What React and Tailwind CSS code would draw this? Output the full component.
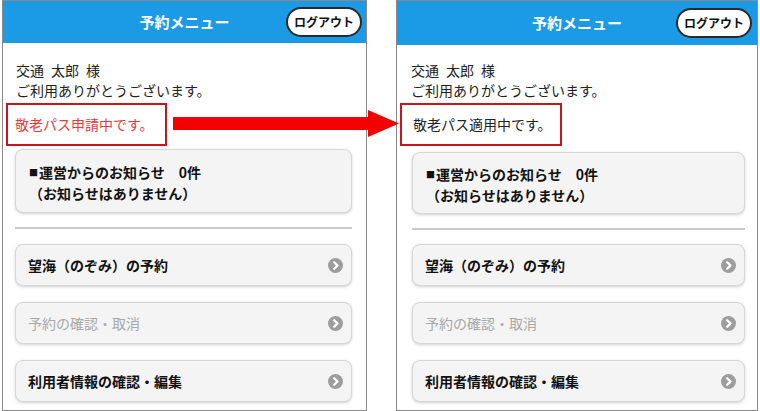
const panels = [
  {
    key: 'before',
    wrap: 'ml-[2px] w-[365px]',
    header: 'h-[42px]',
    logout: 'mr-[4px]',
    body: 'pt-[17px] pl-[3px] pr-[14px]',
    indent: 'pl-[10px]',
    box: 'w-[161px] pl-[7px]',
    card: 'mt-[3px] ml-[9px] h-[64px]',
    divider: 'mt-[14px] ml-[9px]',
    btnWrap: 'mt-[15px] ml-[9px]',
    status: '敬老パス申請中です。',
    statusColor: 'text-[#e8393c]',
  },
  {
    key: 'after',
    wrap: 'ml-[29px] w-[362px]',
    header: 'h-[44px]',
    logout: 'mr-[5px]',
    body: 'pt-[15px] pl-[3px] pr-[12px]',
    indent: 'pl-[11px]',
    box: 'w-[162px] pl-[11px]',
    card: 'mt-[6px] ml-[12px] h-[62px]',
    divider: 'mt-[14px] ml-[12px]',
    btnWrap: 'mt-[14px] ml-[12px]',
    status: '敬老パス適用中です。',
    statusColor: 'text-[#222]',
  },
];

const menu = [
  { label: '望海（のぞみ）の予約', disabled: false },
  { label: '予約の確認・取消', disabled: true },
  { label: '利用者情報の確認・編集', disabled: false },
];

function Chevron() {
  return (
    <svg width="15" height="15" viewBox="0 0 15 15" className="shrink-0">
      <circle cx="7.5" cy="7.5" r="7.5" fill="#9d9d9d" />
      <path d="M6.2 4.2 L9.5 7.5 L6.2 10.8" fill="none" stroke="#fff" strokeWidth="2.3" strokeLinecap="round" strokeLinejoin="round" />
    </svg>
  );
}

function Panel({ p }) {
  return (
    <div className={`${p.wrap} h-[411px] shrink-0 border border-[#8a8a8a] bg-white`}>
      {/* header */}
      <div className={`${p.header} relative flex items-center justify-center bg-[#1b9be6]`}>
        <span className="text-[15px] font-bold text-white">予約メニュー</span>
        <div className={`${p.logout} absolute right-0 flex h-[30px] w-[76px] items-center justify-center rounded-full border-2 border-[#2a2a2a] bg-white text-[12px] font-bold text-[#111]`}>
          ログアウト
        </div>
      </div>

      <div className={p.body}>
        <div className={`${p.indent} text-[14px] leading-[20px] text-[#222]`}>
          <div>交通&ensp;太郎&ensp;様</div>
          <div>ご利用ありがとうございます。</div>
        </div>

        <div className={`${p.box} mt-[3px] flex h-[43px] items-center border-2 border-[#c8161e] text-[14px] ${p.statusColor}`}>
          {p.status}
        </div>

        {/* notices */}
        <div className={`${p.card} flex flex-col justify-center rounded-[8px] border border-[#d6d6d6] bg-[#f4f4f4] pl-[13px] pt-[3px] text-[14px] font-bold leading-[21px] text-[#111] shadow-[0_1px_3px_rgba(0,0,0,0.18)]`}>
          <div className="flex items-center">
            <span className="mr-[1px] text-[9px] leading-none">■</span>
            <span>運営からのお知らせ　0件</span>
          </div>
          <div>（お知らせはありません）</div>
        </div>

        <div className={`${p.divider} h-[2px] bg-[#c9c9c9]`} />

        <div className={`${p.btnWrap} flex flex-col gap-[16px]`}>
          {menu.map((m) => (
            <div
              key={m.label}
              className="flex h-[42px] items-center justify-between rounded-[8px] border border-[#d6d6d6] bg-[#f4f4f4] pl-[12px] pr-[8px] shadow-[0_1px_3px_rgba(0,0,0,0.18)]"
            >
              <span className={m.disabled ? 'text-[14px] text-[#a8a8a8]' : 'text-[14px] font-bold text-[#111]'}>{m.label}</span>
              <Chevron />
            </div>
          ))}
        </div>
      </div>
    </div>
  );
}

export default function App() {
  return (
    <div className="relative flex h-[411px] w-[760px] overflow-hidden bg-white font-['Noto_Sans_CJK_JP',sans-serif]">
      {panels.map((p) => (
        <Panel key={p.key} p={p} />
      ))}

      {/* annotation arrow */}
      <svg className="absolute left-[173px] top-[108px]" width="226" height="31" viewBox="0 0 226 31">
        <rect x="0" y="9" width="197" height="13" fill="#f50000" />
        <polygon points="195,2 226,15.5 195,29" fill="#f50000" />
      </svg>
    </div>
  );
}
